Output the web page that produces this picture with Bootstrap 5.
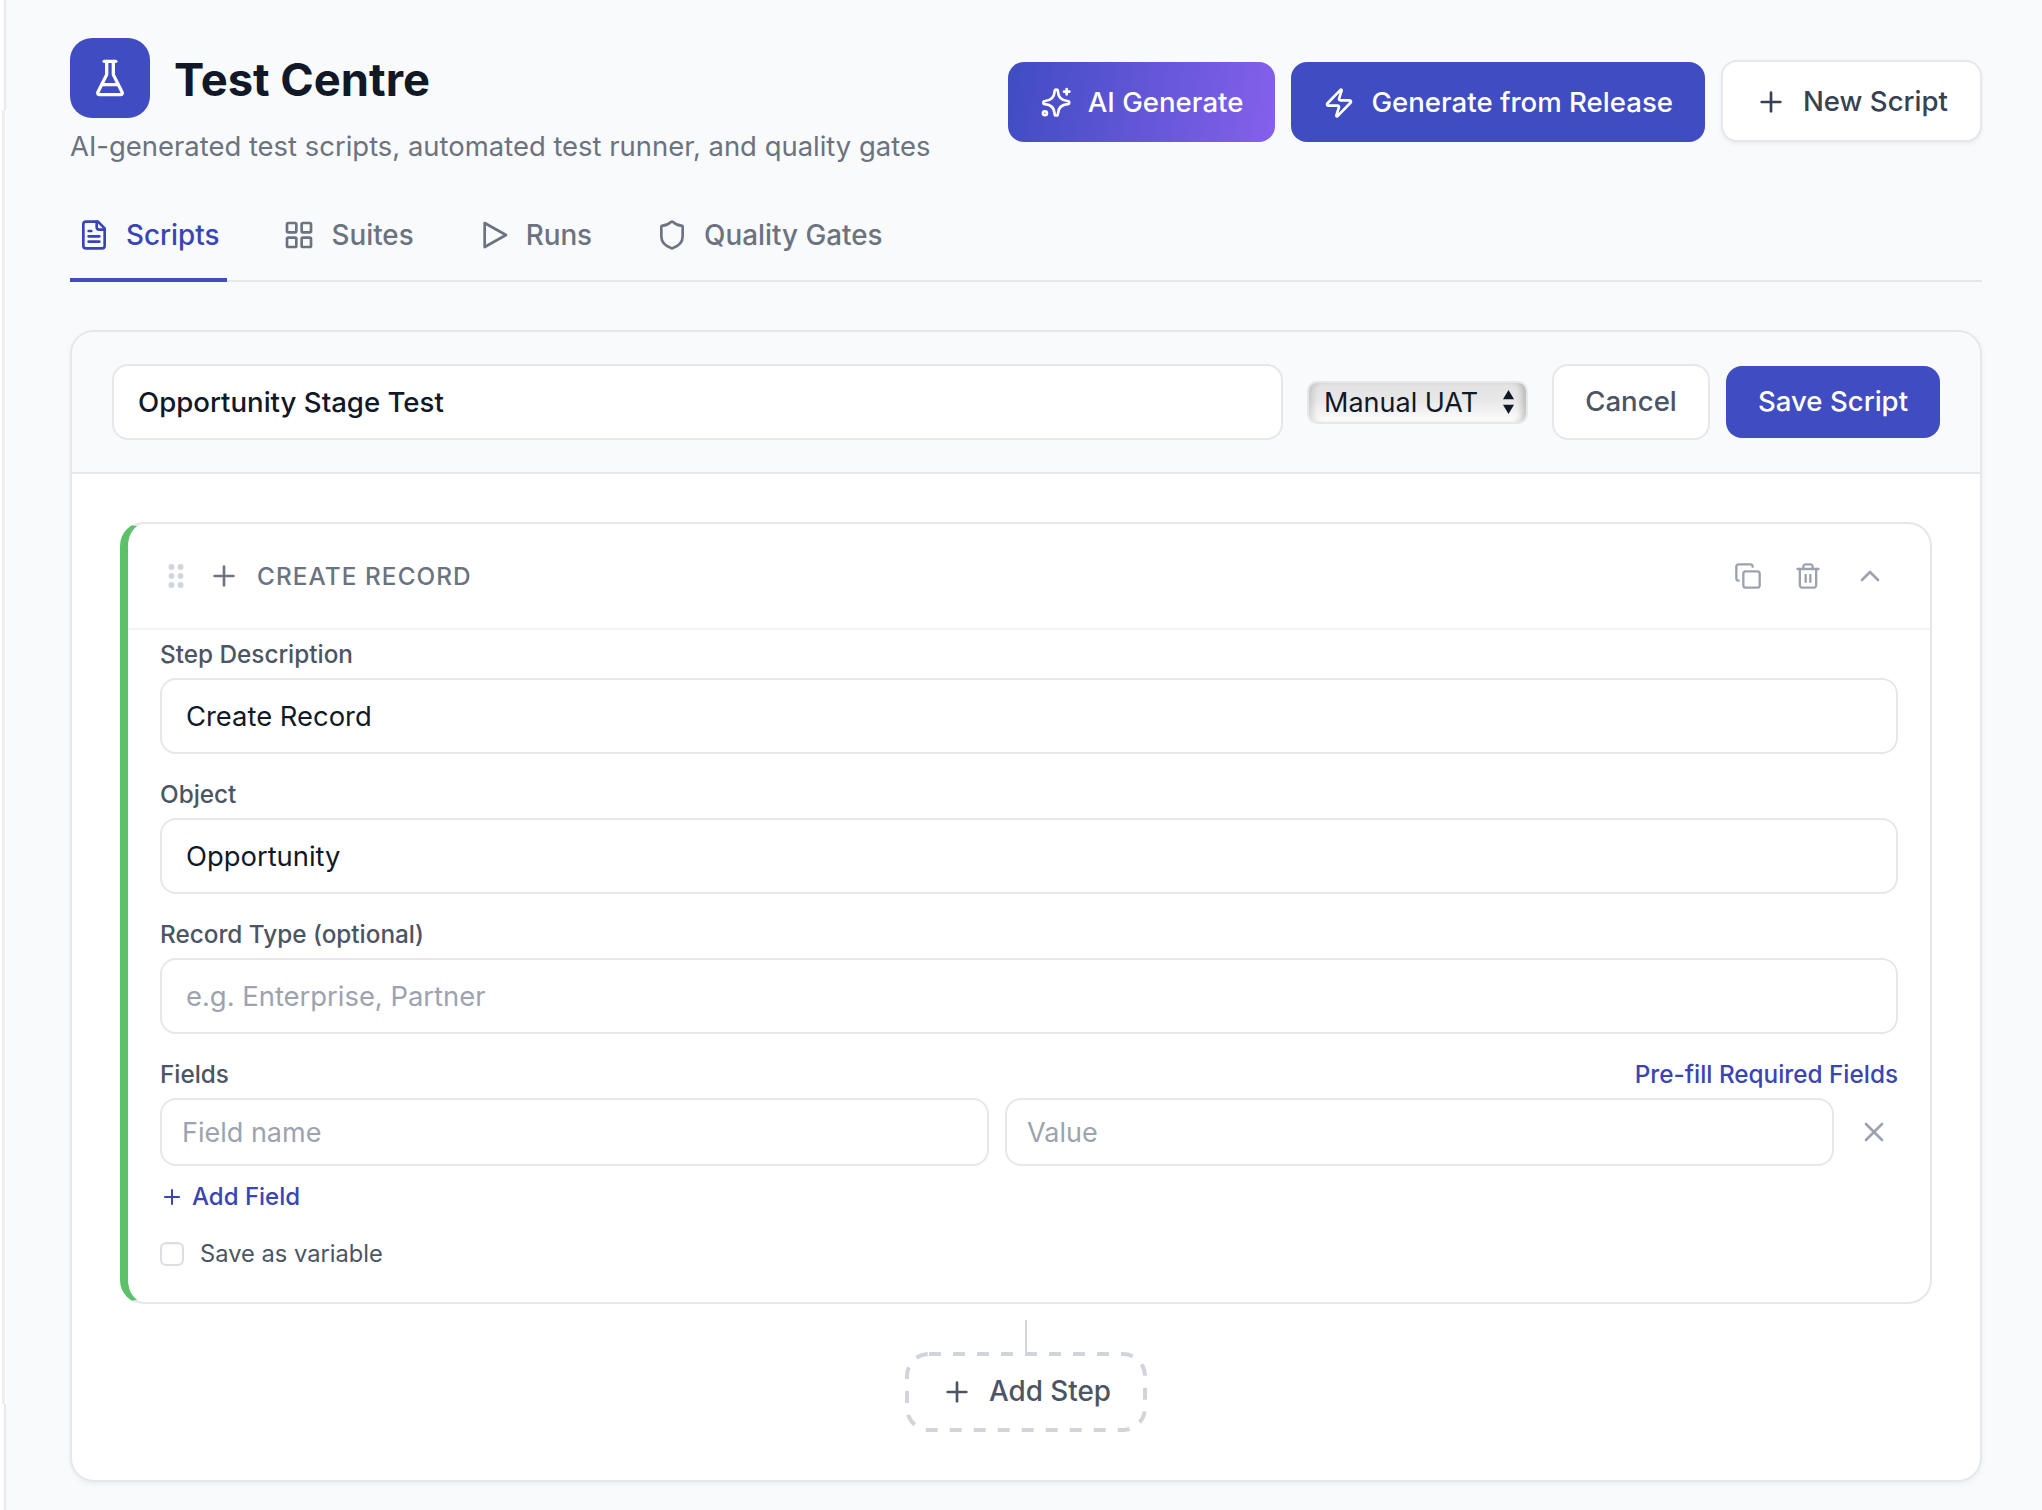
<!DOCTYPE html>
<html lang="en">
<head>
  <meta charset="UTF-8">
  <title>Test Centre</title>
  <link href="https://cdn.jsdelivr.net/npm/bootstrap@5.3.2/dist/css/bootstrap.min.css" rel="stylesheet" />
  <style>
    :root {
      --brand: #3f4cc2;
      --brand-text: #3a45b5;
      --line: #e5e7eb;
    }
    html, body { height: 100%; }
    body {
      background-color: #f9fafb;
      color: #111827;
      font-family: Inter, "Liberation Sans", sans-serif;
      overflow: hidden;
    }
    svg.ico {
      fill: none;
      stroke: currentColor;
      stroke-width: 2;
      stroke-linecap: round;
      stroke-linejoin: round;
      flex: none;
    }
    .i28 { width: 28px; height: 28px; }
    .i32 { width: 32px; height: 32px; }
    .i40 { width: 40px; height: 40px; }

    .rail { width: 6px; background: #fff; flex: none; }
    .rail-top { height: 110px; border-right: 2px solid #e8e9ec; }
    .rail-mid { height: 1294px; width: 5px; border-right: 3px solid #eeeeef; }
    .rail-end { flex: 1; border-right: 2px solid #e8e9ec; }
    .page { padding: 38px 60px 0 64px; flex: 1; min-width: 0; }

    .logo {
      width: 80px; height: 80px;
      background: var(--brand);
      color: #fff;
      border-radius: 22px;
    }
    h1.title { font-size: 45.3px; font-weight: 700; line-height: 80px; margin: 0 0 -2px; color: #111827; padding-top: 2px; }
    .subtitle { font-size: 27.45px; line-height: 42px; color: #6b7280; margin: 7px 0 0; }

    .top-actions { padding-top: 22px; }
    .btn.act {
      height: 80px;
      padding: 2px 32px 0;
      font-size: 27.6px;
      font-weight: 500;
      border-radius: 16px;
      border: 0;
      color: #fff;
      background: var(--brand);
    }
    .btn.act-ai { background: linear-gradient(100deg, #3f4cc2, #8560ec); }
    .btn.act-new {
      height: 82px;
      background: #fff;
      color: #374151;
      border: 2px solid var(--line);
      box-shadow: 0 2px 4px rgba(0,0,0,.06);
    }

    .tabs { margin-top: 19px; border-bottom: 2px solid var(--line); gap: 48px; }
    .tabs .nav-link {
      padding: 29px 8px 23px;
      margin-bottom: -2px;
      line-height: 40px;
      font-size: 27.8px;
      font-weight: 500;
      color: #6b7280;
      border-bottom: 4px solid transparent;
    }
    .tabs .nav-link.active { color: var(--brand-text); border-bottom-color: var(--brand); }

    .script-card {
      margin-top: 48px;
      border: 2px solid var(--line);
      border-radius: 24px;
      box-shadow: 0 2px 6px rgba(0,0,0,.05);
      overflow: hidden;
    }
    .script-card > .card-header {
      background: #f9fafb;
      border-bottom: 2px solid var(--line);
      border-radius: 0;
      padding: 32px 40px;
    }
    .script-card > .card-body { padding: 48px; }

    .form-control {
      border: 2px solid var(--line);
      border-radius: 16px;
      height: 76px;
      padding: 0 24px;
      font-size: 27.4px;
      color: #111827;
      background: #fff;
    }
    .form-control::placeholder { color: #9ca3af; }
    .name-input { font-weight: 500; font-size: 27.6px; flex: 1; }

    .type-select {
      width: 221px;
      height: 43px;
      flex: none;
      padding: 0 0 0 15px;
      font-size: 27px;
      line-height: 39px;
      color: #111827;
      border: 2px solid var(--line);
      border-radius: 10px;
      box-shadow: inset 8px 0 6px -4px rgba(0,0,0,.13), inset -8px 0 6px -4px rgba(0,0,0,.2);
      background:
        url("data:image/svg+xml,%3csvg xmlns='http://www.w3.org/2000/svg' viewBox='0 0 14 26'%3e%3cpath fill='%23111827' d='M7 0l6 10H1zM7 26L1 16h12z'/%3e%3c/svg%3e") no-repeat right 11px center / 13px 24px,
        linear-gradient(#e2e2e2, #e8e8e8 45%, #fdfdfd);
    }

    .btn.cancel, .btn.save { font-size: 27.6px; font-weight: 500; border-radius: 16px; }
    .btn.cancel { width: 158px; height: 76px; padding: 0; background: #fff; color: #4b5563; border: 2px solid var(--line); }
    .btn.save { width: 214px; height: 72px; padding: 0; background: var(--brand); color: #fff; border: 0; }

    .step-card {
      border: 2px solid var(--line);
      border-left: 8px solid #5cc168;
      border-radius: 24px;
      background: #fff;
    }
    .step-head {
      height: 106px;
      padding: 0 34px 0 39px;
      border-bottom: 2px solid #f3f4f6;
    }
    .step-type { font-size: 24.3px; font-weight: 500; letter-spacing: 1.1px; color: #6b7280; }
    .grip { width: 18px; height: 28px; fill: #d1d5db; flex: none; }
    .icon-btn { border: 0; background: none; padding: 12px; color: #9ca3af; line-height: 0; }
    .icon-btn.chev { padding: 10px; margin-left: 2px; }
    .step-head .plus-ico { color: #6b7280; margin-left: 23px; margin-right: 17px; }

    .step-body { padding: 4px 32px 26px; }
    .form-label, .link-small {
      font-size: 24.3px;
      font-weight: 500;
      line-height: 40px;
      margin: 0 0 4px;
      color: #4b5563;
    }
    .field-block { margin-bottom: 20px; }
    .link-small { color: var(--brand-text); text-decoration: none; }

    .field-row .form-control { height: 68px; flex: 1; min-width: 0; padding: 0 20px; font-size: 27px; }
    .remove-btn { width: 48px; padding: 0; border: 0; background: none; color: #9ca3af; line-height: 0; }
    .add-field { margin-top: 11px; margin-bottom: 0; gap: 8px; font-size: 24px; }
    .add-field svg { width: 24px; height: 24px; }
    .var-check { margin-top: 17px; min-height: 40px; padding: 0; gap: 16px; }
    .var-check .form-check-input {
      width: 24px; height: 24px; margin: 0; float: none;
      border: 2px solid #dcdee2; border-radius: 6px; box-shadow: inset 0 1px 2px rgba(0,0,0,.05);
    }
    .var-check .form-check-label { font-size: 23.7px; color: #4b5563; line-height: 40px; }

    .connector { width: 2px; height: 32px; margin-top: 16px; background: #d1d5db; }
    .btn.add-step {
      width: 242px;
      height: 80px;
      padding: 0;
      gap: 16px;
      font-size: 27.8px;
      font-weight: 500;
      color: #4b5563;
      background: #fff;
      border: 0;
    }
    .dash-frame {
      position: absolute;
      inset: 0;
      width: 100%;
      height: 100%;
      fill: none;
      stroke: #d1d5db;
      stroke-width: 4;
      stroke-dasharray: 12 12;
    }
  </style>
</head>
<body class="d-flex">

<div class="rail d-flex flex-column">
  <div class="rail-top"></div>
  <div class="rail-mid"></div>
  <div class="rail-end"></div>
</div>

<div class="page">

  <div class="d-flex justify-content-between align-items-start">
    <div>
      <div class="d-flex align-items-center gap-4">
        <div class="logo d-flex align-items-center justify-content-center">
          <svg class="ico i40" viewBox="0 0 24 24"><path d="M10 2v7.527a2 2 0 0 1-.211.896L4.72 20.55a1 1 0 0 0 .9 1.45h12.76a1 1 0 0 0 .9-1.45l-5.069-10.127A2 2 0 0 1 14 9.527V2"/><path d="M8.5 2h7"/><path d="M7 16h10"/></svg>
        </div>
        <h1 class="title">Test Centre</h1>
      </div>
      <p class="subtitle">AI-generated test scripts, automated test runner, and quality gates</p>
    </div>
    <div class="top-actions d-flex align-items-end gap-3">
      <button class="btn act act-ai d-flex align-items-center gap-3">
        <svg class="ico i32" viewBox="0 0 24 24"><path d="M11 3.2a1.2 1.2 0 0 1 2.4 0c.3 4.5 2.6 7 7.3 7.3a1.2 1.2 0 0 1 0 2.4c-4.7.3-7 2.6-7.3 7.3a1.2 1.2 0 0 1-2.4 0c-.3-4.7-2.6-7-7.3-7.3a1.2 1.2 0 0 1 0-2.4c4.7-.3 7-2.8 7.3-7.3z"/><path d="M20 1.5v4"/><path d="M22 3.5h-4"/><circle cx="3.7" cy="19.7" r="1.5"/></svg>
        AI Generate
      </button>
      <button class="btn act d-flex align-items-center gap-3">
        <svg class="ico i32" viewBox="0 0 24 24"><path d="M4 14a1 1 0 0 1-.78-1.63l9.9-10.2a.5.5 0 0 1 .86.46l-1.92 6.02A1 1 0 0 0 13 10h7a1 1 0 0 1 .78 1.63l-9.9 10.2a.5.5 0 0 1-.86-.46l1.92-6.02A1 1 0 0 0 11 14z"/></svg>
        Generate from Release
      </button>
      <button class="btn act act-new d-flex align-items-center gap-3">
        <svg class="ico i32" viewBox="0 0 24 24"><path d="M5 12h14"/><path d="M12 5v14"/></svg>
        New Script
      </button>
    </div>
  </div>

  <ul class="nav tabs">
    <li class="nav-item">
      <a class="nav-link active d-flex align-items-center gap-3" href="#">
        <svg class="ico i32" viewBox="0 0 24 24"><path d="M15 2H6a2 2 0 0 0-2 2v16a2 2 0 0 0 2 2h12a2 2 0 0 0 2-2V7Z"/><path d="M14 2v4a2 2 0 0 0 2 2h4"/><path d="M10 9H8"/><path d="M16 13H8"/><path d="M16 17H8"/></svg>
        Scripts
      </a>
    </li>
    <li class="nav-item">
      <a class="nav-link d-flex align-items-center gap-3" href="#">
        <svg class="ico i32" viewBox="0 0 24 24"><rect width="7" height="7" x="3" y="3" rx="1"/><rect width="7" height="7" x="14" y="3" rx="1"/><rect width="7" height="7" x="14" y="14" rx="1"/><rect width="7" height="7" x="3" y="14" rx="1"/></svg>
        Suites
      </a>
    </li>
    <li class="nav-item">
      <a class="nav-link d-flex align-items-center gap-3" href="#">
        <svg class="ico i32" viewBox="0 0 24 24"><polygon points="5 3 21 12 5 21 5 3"/></svg>
        Runs
      </a>
    </li>
    <li class="nav-item">
      <a class="nav-link d-flex align-items-center gap-3" href="#">
        <svg class="ico i32" viewBox="0 0 24 24"><path d="M20 13c0 5-3.5 7.5-7.66 8.95a1 1 0 0 1-.67-.01C7.5 20.5 4 18 4 13V6a1 1 0 0 1 1-1c2 0 4.5-1.2 6.24-2.72a1.17 1.17 0 0 1 1.52 0C14.51 3.81 17 5 19 5a1 1 0 0 1 1 1z"/></svg>
        Quality Gates
      </a>
    </li>
  </ul>

  <div class="card script-card">
    <div class="card-header d-flex align-items-center gap-4">
      <input class="form-control name-input" type="text" value="Opportunity Stage Test">
      <select class="form-select type-select">
        <option>Manual UAT</option>
      </select>
      <div class="d-flex align-items-center gap-3">
        <button class="btn cancel">Cancel</button>
        <button class="btn save">Save Script</button>
      </div>
    </div>

    <div class="card-body d-flex flex-column">
      <div class="step-card">
        <div class="step-head d-flex align-items-center">
          <svg class="grip" viewBox="0 0 18 28"><circle cx="4.5" cy="5" r="3"/><circle cx="13.5" cy="5" r="3"/><circle cx="4.5" cy="14" r="3"/><circle cx="13.5" cy="14" r="3"/><circle cx="4.5" cy="23" r="3"/><circle cx="13.5" cy="23" r="3"/></svg>
          <svg class="ico i32 plus-ico" viewBox="0 0 24 24"><path d="M5 12h14"/><path d="M12 5v14"/></svg>
          <span class="step-type">CREATE RECORD</span>
          <div class="ms-auto d-flex align-items-center gap-2">
            <button class="icon-btn"><svg class="ico i28" viewBox="0 0 24 24"><rect width="14" height="14" x="8" y="8" rx="2" ry="2"/><path d="M4 16c-1.1 0-2-.9-2-2V4c0-1.1.9-2 2-2h10c1.1 0 2 .9 2 2"/></svg></button>
            <button class="icon-btn"><svg class="ico i28" viewBox="0 0 24 24"><path d="M3 6h18"/><path d="M19 6v14c0 1-1 2-2 2H7c-1 0-2-1-2-2V6"/><path d="M8 6V4c0-1 1-2 2-2h4c1 0 2 1 2 2v2"/><path d="M10 11v6"/><path d="M14 11v6"/></svg></button>
            <button class="icon-btn chev"><svg class="ico i32" viewBox="0 0 24 24"><path d="m18 15-6-6-6 6"/></svg></button>
          </div>
        </div>

        <div class="step-body">
          <div class="field-block">
            <label class="form-label d-block">Step Description</label>
            <input class="form-control" type="text" value="Create Record">
          </div>
          <div class="field-block">
            <label class="form-label d-block">Object</label>
            <input class="form-control" type="text" value="Opportunity">
          </div>
          <div class="field-block">
            <label class="form-label d-block">Record Type (optional)</label>
            <input class="form-control" type="text" placeholder="e.g. Enterprise, Partner">
          </div>

          <div class="d-flex justify-content-between">
            <label class="form-label">Fields</label>
            <a class="link-small" href="#">Pre-fill Required Fields</a>
          </div>
          <div class="field-row d-flex gap-3">
            <input class="form-control" type="text" placeholder="Field name">
            <input class="form-control" type="text" placeholder="Value">
            <button class="remove-btn d-flex align-items-center justify-content-center">
              <svg class="ico i32" viewBox="0 0 24 24"><path d="M18 6 6 18"/><path d="m6 6 12 12"/></svg>
            </button>
          </div>

          <a class="link-small add-field d-flex align-items-center" href="#">
            <svg class="ico" viewBox="0 0 24 24"><path d="M5 12h14"/><path d="M12 5v14"/></svg>
            Add Field
          </a>

          <div class="form-check var-check d-flex align-items-center">
            <input class="form-check-input" type="checkbox" id="saveVar">
            <label class="form-check-label" for="saveVar">Save as variable</label>
          </div>
        </div>
      </div>

      <div class="connector align-self-center"></div>
      <button class="btn add-step position-relative align-self-center d-flex align-items-center justify-content-center">
        <svg class="dash-frame" viewBox="0 0 242 80"><rect x="2" y="2" width="238" height="76" rx="22"/></svg>
        <svg class="ico i32" viewBox="0 0 24 24"><path d="M5 12h14"/><path d="M12 5v14"/></svg>
        Add Step
      </button>
    </div>
  </div>
</div>

<script src="https://cdn.jsdelivr.net/npm/bootstrap@5.3.2/dist/js/bootstrap.bundle.min.js"></script>
</body>
</html>
